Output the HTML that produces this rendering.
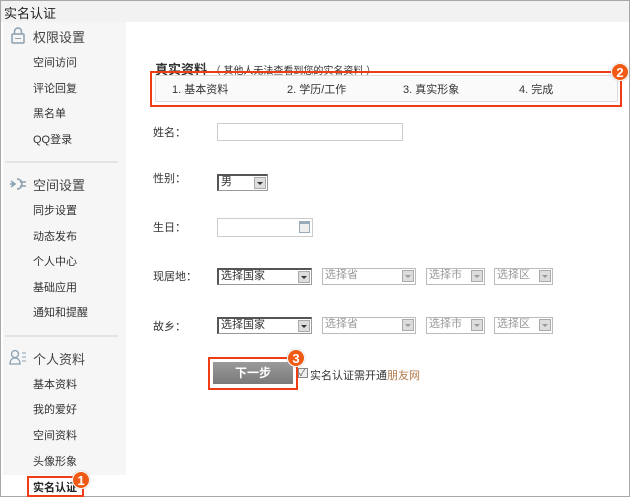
<!DOCTYPE html><html><head><meta charset="utf-8"><style>
*{margin:0;padding:0;box-sizing:border-box}
body{width:630px;height:497px;position:relative;background:#fff;font-family:"Liberation Sans","Noto Sans CJK SC",sans-serif;font-size:12px;color:#333;overflow:hidden}
.a{position:absolute;white-space:nowrap}
.frame{left:0;top:0;width:630px;height:497px;border:1px solid #a8a8a8}
.top{left:1px;top:1px;width:628px;height:21px;background:#f2f2f2;font-size:13px;color:#222;padding:2px 3px}
.side{left:3px;top:22px;width:123px;height:453px;background:#f6f6f6}
.it{font-size:11px;color:#333}
.hd{font-size:13px;color:#444}
.div{left:5px;width:113px;height:2px;background:#e4e4e4}
.lab{font-size:11px;color:#333}
.sel{height:17px;border:1px solid #999;border-left:2px solid #555;border-top:2px solid #555;background:#fff;font-size:11px;padding-left:2px;line-height:13px}
.sel.g{border:1px solid #bbb;color:#999}
.sel b{position:absolute;right:1px;top:1px;width:12px;height:12px;background:#ddd;border:1px solid #aaa}
.sel b:after{content:"";position:absolute;left:2px;top:4px;border:3px solid transparent;border-top:3px solid #333}
.sel.g b:after{border-top-color:#999}
.badge{width:18px;height:18px;border-radius:50%;background:#f05a14;color:#fff;font-weight:bold;font-size:13px;text-align:center;line-height:18px;border:1px solid #fff;box-shadow:0 0 1px #888}
.ob{border:2px solid #f03c14}
</style></head><body>
<div class="a frame"></div>
<div class="a top">实名认证</div>
<div class="a side"></div>
<svg class="a" style="left:10px;top:27px" width="16" height="18"><rect x="2" y="7" width="12" height="9" rx="1" fill="none" stroke="#8aa0b0" stroke-width="1.5"/><path d="M4.5 7V4.5a3.5 3.5 0 0 1 7 0V7" fill="none" stroke="#8aa0b0" stroke-width="1.5"/><line x1="5" y1="11.5" x2="11" y2="11.5" stroke="#8aa0b0"/></svg>
<div class="a hd" style="left:33px;top:27px">权限设置</div>
<div class="a it" style="left:33px;top:54px">空间访问</div>
<div class="a it" style="left:33px;top:80px">评论回复</div>
<div class="a it" style="left:33px;top:105px">黑名单</div>
<div class="a it" style="left:33px;top:131px">QQ登录</div>
<div class="a div" style="top:161px"></div>
<svg class="a" style="left:8px;top:176px" width="20" height="16"><path d="M2 8h5M3 5l4 3-4 3M9 3a5 5 0 1 1 0 10M12 6h6M12 10h6" fill="none" stroke="#8aa0b0" stroke-width="1.5"/></svg>
<div class="a hd" style="left:33px;top:175px">空间设置</div>
<div class="a it" style="left:33px;top:202px">同步设置</div>
<div class="a it" style="left:33px;top:228px">动态发布</div>
<div class="a it" style="left:33px;top:253px">个人中心</div>
<div class="a it" style="left:33px;top:279px">基础应用</div>
<div class="a it" style="left:33px;top:304px">通知和提醒</div>
<div class="a div" style="top:335px"></div>
<svg class="a" style="left:9px;top:349px" width="18" height="16"><circle cx="6" cy="5" r="3.5" fill="none" stroke="#8aa0b0" stroke-width="1.3"/><path d="M1 15c0-4 2-6 5-6s5 2 5 6z" fill="none" stroke="#8aa0b0" stroke-width="1.3"/><path d="M13 4h4M13 8h4M13 12h4" stroke="#8aa0b0"/></svg>
<div class="a hd" style="left:33px;top:349px">个人资料</div>
<div class="a it" style="left:33px;top:376px">基本资料</div>
<div class="a it" style="left:33px;top:401px">我的爱好</div>
<div class="a it" style="left:33px;top:427px">空间资料</div>
<div class="a it" style="left:33px;top:453px">头像形象</div>
<div class="a ob" style="left:27px;top:476px;width:57px;height:21px"></div>
<div class="a it" style="left:33px;top:479px;font-weight:bold;color:#222">实名认证</div>
<div class="a badge" style="left:72px;top:471px">1</div>

<div class="a" style="left:155px;top:59px;font-size:13px;font-weight:bold;color:#333">真实资料 <span style="font-size:10px;font-weight:normal">（ 其他人无法查看到您的实名资料 ）</span></div>
<div class="a ob" style="left:150px;top:71px;width:472px;height:36px"></div>
<div class="a" style="left:155px;top:75px;width:463px;height:27px;border:1px solid #ddd;background:#fafafa"></div>
<div class="a it" style="left:172px;top:81px">1. 基本资料</div>
<div class="a it" style="left:287px;top:81px">2. 学历/工作</div>
<div class="a it" style="left:403px;top:81px">3. 真实形象</div>
<div class="a it" style="left:519px;top:81px">4. 完成</div>
<div class="a badge" style="left:611px;top:63px">2</div>

<div class="a lab" style="left:153px;top:124px">姓名：</div>
<div class="a" style="left:217px;top:123px;width:186px;height:18px;border:1px solid #ccc"></div>
<div class="a lab" style="left:153px;top:170px">性别：</div>
<div class="a sel" style="left:217px;top:174px;width:51px">男<b></b></div>
<div class="a lab" style="left:153px;top:219px">生日：</div>
<div class="a" style="left:217px;top:218px;width:96px;height:19px;border:1px solid #ccc"></div>
<div class="a" style="left:299px;top:221px;width:11px;height:12px;border:1px solid #9ab;background:#eee;border-top:3px solid #9ab"></div>
<div class="a lab" style="left:153px;top:268px">现居地：</div>
<div class="a lab" style="left:153px;top:318px">故乡：</div>
<div class="a sel" style="left:217px;top:268px;width:95px">选择国家<b></b></div>
<div class="a sel g" style="left:322px;top:268px;width:94px">选择省<b></b></div>
<div class="a sel g" style="left:426px;top:268px;width:59px">选择市<b></b></div>
<div class="a sel g" style="left:494px;top:268px;width:59px">选择区<b></b></div>
<div class="a sel" style="left:217px;top:317px;width:95px">选择国家<b></b></div>
<div class="a sel g" style="left:322px;top:317px;width:94px">选择省<b></b></div>
<div class="a sel g" style="left:426px;top:317px;width:59px">选择市<b></b></div>
<div class="a sel g" style="left:494px;top:317px;width:59px">选择区<b></b></div>

<div class="a ob" style="left:208px;top:357px;width:90px;height:33px"></div>
<div class="a" style="left:213px;top:362px;width:80px;height:22px;background:linear-gradient(#9a9a9a,#7a7a7a);color:#fff;font-weight:bold;font-size:12px;text-align:center;line-height:22px">下一步</div>
<div class="a badge" style="left:287px;top:349px">3</div>
<div class="a" style="left:298px;top:368px;width:10px;height:10px;border:1px solid #888;background:#eee;font-size:9px;line-height:8px;color:#555">✓</div>
<div class="a it" style="left:310px;top:367px">实名认证需开通<span style="color:#b07a4a">朋友网</span></div>
</body></html>
